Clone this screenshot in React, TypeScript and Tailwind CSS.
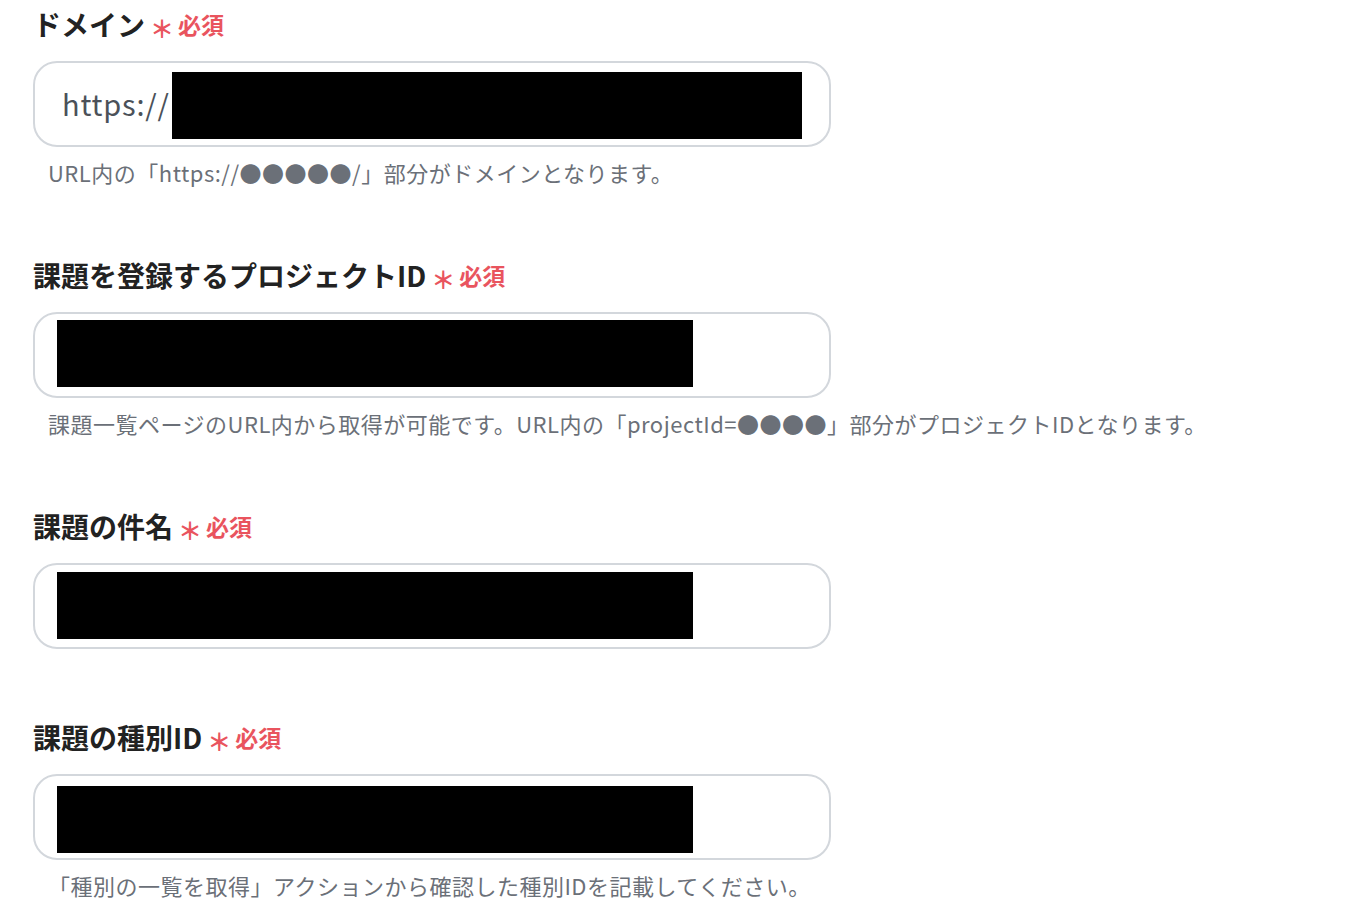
const fontJP = { fontFamily: '"Noto Sans CJK JP", "Noto Sans", sans-serif' }

type Field = {
  label: string
  help?: string
  prefix?: string
  boxTop: number
}

const fields: Field[] = [
  {
    label: "ドメイン",
    prefix: "https://",
    help: "URL内の「https://●●●●●/」部分がドメインとなります。",
    boxTop: 9,
  },
  {
    label: "課題を登録するプロジェクトID",
    help: "課題一覧ページのURL内から取得が可能です。URL内の「projectId=●●●●」部分がプロジェクトIDとなります。",
    boxTop: 6,
  },
  { label: "課題の件名", boxTop: 7 },
  {
    label: "課題の種別ID",
    help: "「種別の一覧を取得」アクションから確認した種別IDを記載してください。",
    boxTop: 10,
  },
]

function Required() {
  return (
    <span className="ml-[5px] inline-flex items-center gap-[4px] text-[#e9545e] font-bold">
      <span className="text-[24px] leading-none translate-y-[4px]">＊</span>
      <span className="text-[23px] leading-none">必須</span>
    </span>
  )
}

function FormField({ f }: { f: Field }) {
  return (
    <section className="mb-[70px] last:mb-0">
      <div className="flex items-center h-[36px] mb-[19px]">
        <span className="text-[28px] font-bold text-[#222] leading-none">{f.label}</span>
        <Required />
      </div>
      <div className="w-[798px] h-[86px] rounded-[24px] border-2 border-[#d3d7dc] bg-white px-[27px] flex items-start">
        {f.prefix ? (
          <>
            <span className="mt-[23px] text-[29px] leading-[34px] tracking-[0.8px] text-[#4b5159]">{f.prefix}</span>
            <div className="ml-[2px] w-[636px] h-[67px] bg-black" style={{ marginTop: f.boxTop }} />
          </>
        ) : (
          <div className="-ml-[5px] w-[636px] h-[67px] bg-black" style={{ marginTop: f.boxTop }} />
        )}
      </div>
      {f.help && (
        <p className="mt-[10px] pl-[15px] text-[22px] leading-[30px] tracking-[0.5px] text-[#6b7078] whitespace-nowrap">
          {f.help}
        </p>
      )}
    </section>
  )
}

export default function App() {
  return (
    <main className="min-h-screen bg-white pt-[6px] pl-[33px]" style={fontJP}>
      {fields.map((f) => (
        <FormField key={f.label} f={f} />
      ))}
    </main>
  )
}
